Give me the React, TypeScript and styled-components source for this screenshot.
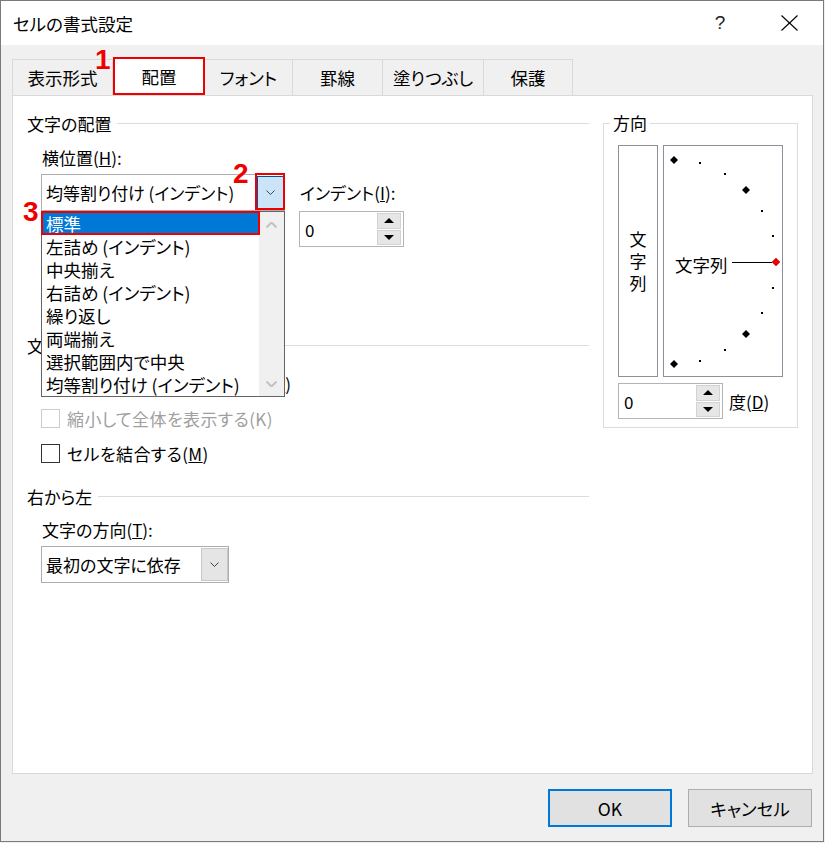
import React from "react";
import styled, { createGlobalStyle, css } from "styled-components";

const GlobalStyle = createGlobalStyle`
  html, body {
    margin: 0;
    padding: 0;
    background: #f0f0f0;
  }
  body {
    font-family: "Noto Sans CJK JP", "Noto Sans", sans-serif;
    font-size: 17px;
    font-feature-settings: "palt";
    color: #000;
  }
  * { box-sizing: border-box; }
`;

const Window = styled.div`
  width: 824px;
  height: 842px;
  border: 1px solid #7a7a7a;
  display: flex;
  flex-direction: column;
  background: #f0f0f0;
`;

const TitleBar = styled.div`
  height: 44px;
  background: #fff;
  display: flex;
  align-items: center;
  padding-left: 12px;
`;

const Title = styled.div`
  font-size: 17.5px;
`;

const TitleButtons = styled.div`
  margin-left: auto;
  display: flex;
  height: 100%;
`;

const TitleButton = styled.div<{ $w: number }>`
  width: ${p => p.$w}px;
  display: flex;
  align-items: center;
  justify-content: center;
`;

const HelpMark = styled.span`
  font-family: "Liberation Sans", sans-serif;
  font-size: 19px;
  color: #222;
`;

const Body = styled.div`
  flex: 1;
  display: flex;
  flex-direction: column;
  padding: 14px 10px 0 11px;
`;

const TabRow = styled.div`
  display: flex;
  align-items: flex-end;
  height: 36px;
`;

const Tab = styled.div<{ $w: number; $active?: boolean; $first?: boolean }>`
  position: relative;
  width: ${p => p.$w}px;
  height: 36px;
  margin-left: ${p => (p.$first ? 0 : -1)}px;
  display: flex;
  align-items: center;
  justify-content: center;
  border: 1px solid #d9d9d9;
  border-bottom: none;
  background: #f0f0f0;
  font-size: 17.5px;
  ${p =>
    p.$active &&
    css`
      height: 38px;
      margin-left: 0;
      background: #fff;
      border: 2px solid #ee0000;
      z-index: 1;
    `}
`;

const Marker = styled.span<{ $left: number; $top: number }>`
  position: absolute;
  left: ${p => p.$left}px;
  top: ${p => p.$top}px;
  font-family: "Liberation Sans", sans-serif;
  font-weight: bold;
  font-size: 28px;
  line-height: 28px;
  color: #ee0000;
  text-shadow: 0 0 2px #fff;
  z-index: 5;
`;

const Panel = styled.div`
  height: 679px;
  background: #fff;
  border: 1px solid #d9d9d9;
  display: flex;
  gap: 14px;
  padding: 15px 13px 0 14px;
`;

const LeftColumn = styled.div`
  width: 562px;
  display: flex;
  flex-direction: column;
`;

const GroupHeader = styled.div<{ $mt?: number }>`
  display: flex;
  align-items: center;
  gap: 6px;
  height: 24px;
  margin-top: ${p => p.$mt ?? 0}px;
  &::after {
    content: "";
    flex: 1;
    height: 1px;
    background: #dcdcdc;
  }
`;

const Indent = styled.div`
  padding-left: 14px;
  display: flex;
  flex-direction: column;
`;

const AlignRow = styled.div`
  display: flex;
  align-items: flex-start;
`;

const FieldStack = styled.div`
  display: flex;
  flex-direction: column;
`;

const IndentField = styled.div`
  display: flex;
  flex-direction: column;
  padding-top: 46px;
  margin-left: 14px;
`;

const Label = styled.div<{ $mt?: number }>`
  height: 24px;
  line-height: 24px;
  padding-left: 1px;
  margin-top: ${p => p.$mt ?? 0}px;
`;

const Combo = styled.div<{ $w: number; $mt?: number }>`
  position: relative;
  width: ${p => p.$w}px;
  height: 37px;
  margin-top: ${p => p.$mt ?? 4}px;
  border: 1px solid #adadad;
  background: #fff;
  display: flex;
  align-items: center;
  padding-left: 4px;
`;

const DropButton = styled.div<{ $open?: boolean; $marked?: boolean }>`
  position: relative;
  margin-left: auto;
  width: 27px;
  height: 33px;
  display: flex;
  align-items: center;
  justify-content: center;
  background: ${p => (p.$open ? "#cce4f7" : "#e5e5e5")};
  border: 1px solid ${p => (p.$open ? "#005499" : "#c8c8c8")};
  ${p =>
    p.$marked &&
    css`
      &::after {
        content: "";
        position: absolute;
        top: -4px;
        bottom: -2px;
        left: -3px;
        right: -2px;
        border: 2px solid #ee0000;
      }
    `}
`;

const DropList = styled.div`
  position: absolute;
  top: calc(100% + 1px);
  left: -1px;
  width: 244px;
  height: 186px;
  border: 1px solid #646464;
  background: #fff;
  display: flex;
  z-index: 3;
`;

const ListItems = styled.div`
  flex: 1;
  display: flex;
  flex-direction: column;
`;

const ListItem = styled.div<{ $selected?: boolean }>`
  position: relative;
  height: 23px;
  line-height: 23px;
  padding-left: 4px;
  font-size: 17.5px;
  white-space: nowrap;
  ${p =>
    p.$selected &&
    css`
      background: #0078d7;
      color: #fff;
      &::after {
        content: "";
        position: absolute;
        top: -1px;
        left: -1px;
        right: -1px;
        bottom: 0;
        border: 2px solid #ee0000;
      }
    `}
`;

const ScrollBar = styled.div`
  width: 25px;
  background: #f0f0f0;
  display: flex;
  flex-direction: column;
  justify-content: space-between;
  align-items: center;
  padding: 10px 0 9px;
`;

const Spin = styled.div<{ $mt?: number }>`
  width: 105px;
  height: 36px;
  margin-top: ${p => p.$mt ?? 0}px;
  border: 1px solid #b4b4b4;
  background: #fff;
  display: flex;
  align-items: center;
  padding-left: 5px;
`;

const SpinButtons = styled.div`
  margin-left: auto;
  margin-right: 2px;
  width: 24px;
  height: 32px;
  display: flex;
  flex-direction: column;
  gap: 1px;
`;

const SpinButton = styled.div`
  flex: 1;
  background: #e6e6e6;
  border: 1px solid #d2d2d2;
  display: flex;
  align-items: center;
  justify-content: center;
`;

const CheckRow = styled.div<{ $disabled?: boolean; $mt?: number }>`
  display: flex;
  align-items: center;
  gap: 7px;
  height: 24px;
  padding-left: 14px;
  margin-top: ${p => p.$mt ?? 11}px;
  color: ${p => (p.$disabled ? "#a0a0a0" : "#000")};
  letter-spacing: 0.4px;
  white-space: nowrap;
`;

const CheckBox = styled.span<{ $disabled?: boolean }>`
  width: 19px;
  height: 19px;
  flex: none;
  border: 1px solid ${p => (p.$disabled ? "#cccccc" : "#333333")};
  background: #fff;
`;

const Orientation = styled.fieldset`
  margin: 0;
  width: 195px;
  height: 317px;
  border: 1px solid #dcdcdc;
  padding: 10px 14px 0 14px;
  min-inline-size: 0;
`;

const Legend = styled.legend`
  margin-left: -8px;
  padding: 0 3px;
  height: 24px;
  line-height: 24px;
`;

const DialRow = styled.div`
  display: flex;
  gap: 5px;
`;

const VerticalBox = styled.div`
  width: 40px;
  height: 232px;
  border: 1px solid #8e8f99;
  display: flex;
  align-items: center;
  justify-content: center;
`;

const VerticalText = styled.span`
  writing-mode: vertical-rl;
  letter-spacing: 5px;
  margin-top: 5px;
`;

const DialBox = styled.div`
  width: 120px;
  height: 232px;
  border: 1px solid #8e8f99;
`;

const DegreeRow = styled.div`
  display: flex;
  align-items: center;
  gap: 6px;
  margin-top: 6px;
`;

const Footer = styled.div`
  display: flex;
  justify-content: flex-end;
  gap: 16px;
  margin-top: 15px;
  padding-right: 1px;
`;

const Button = styled.button<{ $default?: boolean }>`
  width: 124px;
  height: 38px;
  background: #e1e1e1;
  border: ${p => (p.$default ? "2px solid #0078d7" : "1px solid #adadad")};
  font-family: inherit;
  font-feature-settings: "palt";
  font-size: 17.5px;
  color: #000;
  padding: 0;
`;

const Chevron = ({ up, color = "#333", w = 9, h = 5, sw = 1 }: { up?: boolean; color?: string; w?: number; h?: number; sw?: number }) => (
  <svg width={w} height={h} viewBox={`0 0 ${w} ${h}`}>
    <polyline
      points={up ? `0.5,${h - 0.5} ${w / 2},0.5 ${w - 0.5},${h - 0.5}` : `0.5,0.5 ${w / 2},${h - 0.5} ${w - 0.5},0.5`}
      fill="none"
      stroke={color}
      strokeWidth={sw}
    />
  </svg>
);

const Triangle = ({ up }: { up?: boolean }) => (
  <svg width={10} height={5} viewBox="0 0 10 5">
    <polygon points={up ? "0,5 5,0 10,5" : "0,0 10,0 5,5"} fill="#000" />
  </svg>
);

const CloseIcon = () => (
  <svg width={17} height={16} viewBox="0 0 17 16">
    <line x1={0.5} y1={0.5} x2={16.5} y2={15.5} stroke="#000" strokeWidth={1.1} />
    <line x1={16.5} y1={0.5} x2={0.5} y2={15.5} stroke="#000" strokeWidth={1.1} />
  </svg>
);

const SpinControl = ({ value, mt }: { value: string; mt?: number }) => (
  <Spin $mt={mt}>
    {value}
    <SpinButtons>
      <SpinButton><Triangle up /></SpinButton>
      <SpinButton><Triangle /></SpinButton>
    </SpinButtons>
  </Spin>
);

const Dial = () => {
  const R = 102;
  const CX = 10;
  const CY = 116;
  const angles = [90, 75, 60, 45, 30, 15, 0, -15, -30, -45, -60, -75, -90];
  return (
    <svg width={118} height={230}>
      {angles.map(a => {
        const rad = (a * Math.PI) / 180;
        const x = Math.round(CX + R * Math.cos(rad));
        const y = Math.round(CY - R * Math.sin(rad));
        if (a % 45 === 0) {
          return (
            <polygon
              key={a}
              points={`${x},${y - 4} ${x + 4},${y} ${x},${y + 4} ${x - 4},${y}`}
              fill={a === 0 ? "#ee0000" : "#000"}
              stroke={a === 0 ? "#a00000" : "none"}
              strokeWidth={0.5}
            />
          );
        }
        return <rect key={a} x={x - 1} y={y - 1} width={2} height={2} fill="#000" />;
      })}
      <line x1={68} y1={116.5} x2={108} y2={116.5} stroke="#000" strokeWidth={1} />
      <text x={11} y={126} fontSize={17.5} fontFamily='"Noto Sans CJK JP", sans-serif' fill="#000">
        文字列
      </text>
    </svg>
  );
};

const tabs = [
  { label: "表示形式", w: 101 },
  { label: "配置", w: 92, active: true },
  { label: "フォント", w: 89 },
  { label: "罫線", w: 91 },
  { label: "塗りつぶし", w: 102 },
  { label: "保護", w: 90 },
];

const alignments = [
  "標準",
  "左詰め (インデント)",
  "中央揃え",
  "右詰め (インデント)",
  "繰り返し",
  "両端揃え",
  "選択範囲内で中央",
  "均等割り付け (インデント)",
];

export default function App() {
  return (
    <>
      <GlobalStyle />
      <Window>
        <TitleBar>
          <Title>セルの書式設定</Title>
          <TitleButtons>
            <TitleButton $w={70}><HelpMark>?</HelpMark></TitleButton>
            <TitleButton $w={68}><CloseIcon /></TitleButton>
          </TitleButtons>
        </TitleBar>
        <Body>
          <TabRow>
            {tabs.map((t, i) => (
              <Tab key={t.label} $w={t.w} $active={t.active} $first={i === 0}>
                {t.label}
                {t.active && <Marker $left={-20} $top={-13}>1</Marker>}
              </Tab>
            ))}
          </TabRow>
          <Panel>
            <LeftColumn>
              <GroupHeader>文字の配置</GroupHeader>
              <Indent>
                <AlignRow>
                  <FieldStack>
                    <Label $mt={11}>横位置(<u>H</u>):</Label>
                    <Combo $w={244}>
                      均等割り付け (インデント)
                      <DropButton $open $marked>
                        <Chevron color="#444" w={9} h={5} />
                        <Marker $left={-25} $top={-17}>2</Marker>
                      </DropButton>
                      <DropList>
                        <Marker $left={-19} $top={-14}>3</Marker>
                        <ListItems>
                          {alignments.map((a, i) => (
                            <ListItem key={a} $selected={i === 0}>{a}</ListItem>
                          ))}
                        </ListItems>
                        <ScrollBar>
                          <Chevron up color="#c2c2c2" w={11} h={6} sw={2} />
                          <Chevron color="#c2c2c2" w={11} h={6} sw={2} />
                        </ScrollBar>
                      </DropList>
                    </Combo>
                  </FieldStack>
                  <IndentField>
                    <Label>インデント(<u>I</u>):</Label>
                    <SpinControl value="0" mt={6} />
                  </IndentField>
                </AlignRow>
              </Indent>

              <GroupHeader $mt={86}>文字の制御</GroupHeader>
              <CheckRow $mt={14}>
                <CheckBox />
                <span>折り返して全体を表示する(<u>W</u>)</span>
              </CheckRow>
              <CheckRow $disabled>
                <CheckBox $disabled />
                <span>縮小して全体を表示する(K)</span>
              </CheckRow>
              <CheckRow>
                <CheckBox />
                <span>セルを結合する(<u>M</u>)</span>
              </CheckRow>

              <GroupHeader $mt={19}>右から左</GroupHeader>
              <Indent>
                <Label $mt={10}>文字の方向(<u>T</u>):</Label>
                <Combo $w={188}>
                  最初の文字に依存
                  <DropButton><Chevron color="#444" /></DropButton>
                </Combo>
              </Indent>
            </LeftColumn>

            <Orientation>
              <Legend>方向</Legend>
              <DialRow>
                <VerticalBox><VerticalText>文字列</VerticalText></VerticalBox>
                <DialBox><Dial /></DialBox>
              </DialRow>
              <DegreeRow>
                <SpinControl value="0" />
                <span>度(<u>D</u>)</span>
              </DegreeRow>
            </Orientation>
          </Panel>
          <Footer>
            <Button $default>OK</Button>
            <Button>キャンセル</Button>
          </Footer>
        </Body>
      </Window>
    </>
  );
}
